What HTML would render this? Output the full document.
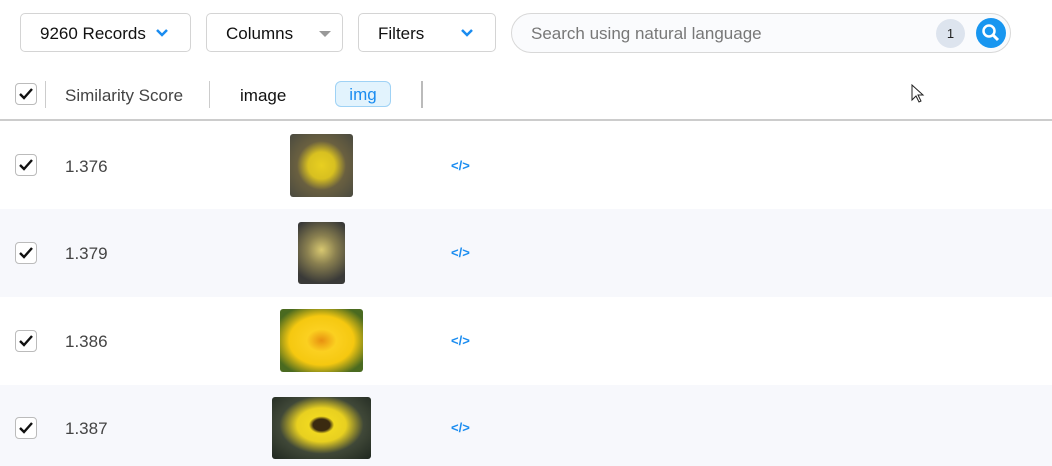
<html><head><style>
body{margin:0;width:1052px;height:466px;overflow:hidden;background:#fff;font-family:"Liberation Sans",sans-serif;position:relative}
.a{position:absolute}
.btn{position:absolute;top:13px;height:39px;border:1px solid #d4d4d4;border-radius:5px;box-sizing:border-box;font-size:17px;color:#111;line-height:40px}
.cb{position:absolute;left:15px;width:22px;height:22px;border:1px solid #bbb;border-radius:4px;box-sizing:border-box;background:#fff}
.cb svg{position:absolute;left:3px;top:4px}
.num{position:absolute;left:65px;font-size:17px;color:#444}
.code{position:absolute;left:451px;font-size:13px;font-weight:bold;color:#1a8cf0}
.img{position:absolute;border-radius:3px}
</style></head><body>
<div class="btn" style="left:20px;width:171px;padding-left:19px">9260 Records<svg class="a" style="left:135px;top:15px" width="12" height="9"><path d="M1 1l5 5 5-5" stroke="#1a8cf0" stroke-width="2.5" fill="none"/></svg></div>
<div class="btn" style="left:206px;width:137px;padding-left:19px">Columns<svg class="a" style="left:112px;top:17px" width="12" height="7"><path d="M0 0h12L6 6z" fill="#999"/></svg></div>
<div class="btn" style="left:358px;width:138px;padding-left:19px">Filters<svg class="a" style="left:102px;top:15px" width="12" height="9"><path d="M1 1l5 5 5-5" stroke="#1a8cf0" stroke-width="2.5" fill="none"/></svg></div>
<div class="a" style="left:511px;top:13px;width:500px;height:40px;border:1px solid #d8d8d8;border-radius:20px;box-sizing:border-box;background:#fafbfd"></div>
<div class="a" style="left:531px;top:24px;font-size:17px;color:#777">Search using natural language</div>
<div class="a" style="left:936px;top:19px;width:29px;height:29px;border-radius:50%;background:#dde4ee;font-size:13px;text-align:center;line-height:29px;color:#222">1</div>
<div class="a" style="left:976px;top:18px;width:30px;height:30px;border-radius:50%;background:#1896f0"><svg width="30" height="30"><circle cx="13" cy="13" r="5.5" stroke="#fff" stroke-width="2.5" fill="none"/><path d="M17 17l5 5" stroke="#fff" stroke-width="3"/></svg></div>
<div class="cb" style="top:83px"><svg width="14" height="12"><path d="M1 6l4 4 8-9" stroke="#111" stroke-width="2.4" fill="none"/></svg></div>
<div class="a" style="left:45px;top:81px;width:1px;height:27px;background:#ccc"></div>
<div class="a" style="left:65px;top:86px;font-size:17px;color:#444">Similarity Score</div>
<div class="a" style="left:209px;top:81px;width:1px;height:27px;background:#ccc"></div>
<div class="a" style="left:240px;top:86px;font-size:17px;color:#111">image</div>
<div class="a" style="left:335px;top:81px;width:56px;height:26px;border:1px solid #9fd2f5;background:#e2f3fd;border-radius:6px;box-sizing:border-box;text-align:center;line-height:26px;font-size:17px;color:#1a8cf0">img</div>
<div class="a" style="left:421px;top:81px;width:2px;height:27px;background:#bbb"></div>
<div class="a" style="left:0;top:119px;width:1052px;height:2px;background:#ccc"></div>
<div class="a" style="left:0;top:209px;width:1052px;height:88px;background:#f7f8fc"></div>
<div class="a" style="left:0;top:385px;width:1052px;height:81px;background:#f7f8fc"></div>
<div class="cb" style="top:154px"><svg width="14" height="12"><path d="M1 6l4 4 8-9" stroke="#111" stroke-width="2.4" fill="none"/></svg></div>
<div class="cb" style="top:242px"><svg width="14" height="12"><path d="M1 6l4 4 8-9" stroke="#111" stroke-width="2.4" fill="none"/></svg></div>
<div class="cb" style="top:330px"><svg width="14" height="12"><path d="M1 6l4 4 8-9" stroke="#111" stroke-width="2.4" fill="none"/></svg></div>
<div class="cb" style="top:417px"><svg width="14" height="12"><path d="M1 6l4 4 8-9" stroke="#111" stroke-width="2.4" fill="none"/></svg></div>
<div class="num" style="top:157px">1.376</div>
<div class="num" style="top:244px">1.379</div>
<div class="num" style="top:332px">1.386</div>
<div class="num" style="top:419px">1.387</div>
<div class="img" style="left:290px;top:134px;width:63px;height:63px;background:radial-gradient(circle at 50% 50%,#e8cf20 0,#d8c020 30%,#6a6040 55%,#4a4a40 100%)"></div>
<div class="img" style="left:298px;top:222px;width:47px;height:62px;background:radial-gradient(circle at 50% 45%,#d8c870 0,#8a8050 35%,#3a3a38 80%)"></div>
<div class="img" style="left:280px;top:309px;width:83px;height:63px;background:radial-gradient(ellipse at 50% 50%,#e89010 0,#fbd020 25%,#f5c810 55%,#4a6a20 85%)"></div>
<div class="img" style="left:272px;top:397px;width:99px;height:62px;background:radial-gradient(ellipse at 50% 45%,#3a2a10 0,#3a2a10 12%,#f0d820 18%,#e8d020 35%,#404838 60%,#202820 100%)"></div>
<div class="code" style="top:158px">&lt;/&gt;</div>
<div class="code" style="top:245px">&lt;/&gt;</div>
<div class="code" style="top:333px">&lt;/&gt;</div>
<div class="code" style="top:420px">&lt;/&gt;</div>
<svg class="a" style="left:911px;top:84px" width="14" height="20"><path d="M1 1v15l4-4 3 6 2-1-3-6h5z" fill="#fff" stroke="#222" stroke-width="1"/></svg>
</body></html>
